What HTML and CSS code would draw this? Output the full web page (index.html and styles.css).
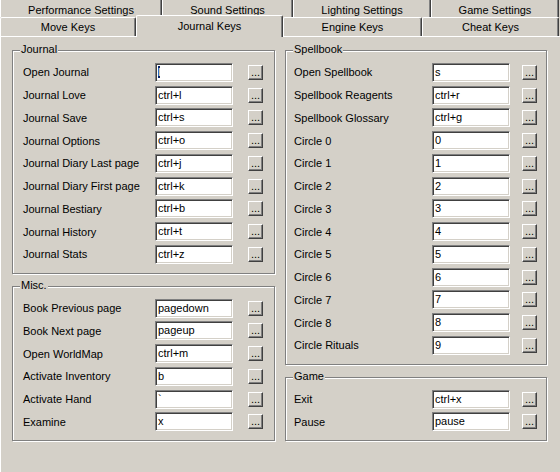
FILE: index.html
```html
<!DOCTYPE html>
<html lang="en">
<head>
<meta charset="UTF-8">
<title>Key Settings</title>
<link rel="stylesheet" href="styles.css">
</head>
<body>
<div class="tabs">
  <div class="tab-row tab-row-back">
    <div class="tab">Performance Settings</div>
    <div class="tab">Sound Settings</div>
    <div class="tab">Lighting Settings</div>
    <div class="tab">Game Settings</div>
  </div>
  <div class="tab-row tab-row-front">
    <div class="tab">Move Keys</div>
    <div class="tab tab-active">Journal Keys</div>
    <div class="tab">Engine Keys</div>
    <div class="tab">Cheat Keys</div>
  </div>
</div>

<div class="panel">
  <div class="column column-left">
    <div class="group">
      <span class="legend">Journal</span>
      <div class="rows">
        <span class="label">Open Journal</span><div class="edit"><span class="sel">l</span></div><button class="btn">...</button>
        <span class="label">Journal Love</span><div class="edit">ctrl+l</div><button class="btn">...</button>
        <span class="label">Journal Save</span><div class="edit">ctrl+s</div><button class="btn">...</button>
        <span class="label">Journal Options</span><div class="edit">ctrl+o</div><button class="btn">...</button>
        <span class="label">Journal Diary Last page</span><div class="edit">ctrl+j</div><button class="btn">...</button>
        <span class="label">Journal Diary First page</span><div class="edit">ctrl+k</div><button class="btn">...</button>
        <span class="label">Journal Bestiary</span><div class="edit">ctrl+b</div><button class="btn">...</button>
        <span class="label">Journal History</span><div class="edit">ctrl+t</div><button class="btn">...</button>
        <span class="label">Journal Stats</span><div class="edit">ctrl+z</div><button class="btn">...</button>
      </div>
    </div>
    <div class="group">
      <span class="legend">Misc.</span>
      <div class="rows">
        <span class="label">Book Previous page</span><div class="edit">pagedown</div><button class="btn">...</button>
        <span class="label">Book Next page</span><div class="edit">pageup</div><button class="btn">...</button>
        <span class="label">Open WorldMap</span><div class="edit">ctrl+m</div><button class="btn">...</button>
        <span class="label">Activate Inventory</span><div class="edit">b</div><button class="btn">...</button>
        <span class="label">Activate Hand</span><div class="edit">`</div><button class="btn">...</button>
        <span class="label">Examine</span><div class="edit">x</div><button class="btn">...</button>
      </div>
    </div>
  </div>

  <div class="column column-right">
    <div class="group">
      <span class="legend">Spellbook</span>
      <div class="rows">
        <span class="label">Open Spellbook</span><div class="edit">s</div><button class="btn">...</button>
        <span class="label">Spellbook Reagents</span><div class="edit">ctrl+r</div><button class="btn">...</button>
        <span class="label">Spellbook Glossary</span><div class="edit">ctrl+g</div><button class="btn">...</button>
        <span class="label">Circle 0</span><div class="edit">0</div><button class="btn">...</button>
        <span class="label">Circle 1</span><div class="edit">1</div><button class="btn">...</button>
        <span class="label">Circle 2</span><div class="edit">2</div><button class="btn">...</button>
        <span class="label">Circle 3</span><div class="edit">3</div><button class="btn">...</button>
        <span class="label">Circle 4</span><div class="edit">4</div><button class="btn">...</button>
        <span class="label">Circle 5</span><div class="edit">5</div><button class="btn">...</button>
        <span class="label">Circle 6</span><div class="edit">6</div><button class="btn">...</button>
        <span class="label">Circle 7</span><div class="edit">7</div><button class="btn">...</button>
        <span class="label">Circle 8</span><div class="edit">8</div><button class="btn">...</button>
        <span class="label">Circle Rituals</span><div class="edit">9</div><button class="btn">...</button>
      </div>
    </div>
    <div class="group">
      <span class="legend">Game</span>
      <div class="rows">
        <span class="label">Exit</span><div class="edit">ctrl+x</div><button class="btn">...</button>
        <span class="label">Pause</span><div class="edit">pause</div><button class="btn">...</button>
      </div>
    </div>
  </div>
</div>
</body>
</html>
```

FILE: styles.css
```css
* {
  box-sizing: border-box;
}
body {
  margin: 0;
  background-color: #d4d0c8;
  font-family: "Liberation Sans", Arial, sans-serif;
  font-size: 11px;
  color: #000;
  overflow: hidden;
}

/* tab strip, two rows */
.tab-row {
  display: flex;
  align-items: flex-start;
}
.tab-row-back {
  height: 17px;
}
.tab-row-front {
  height: 19px;
}
.tab {
  display: flex;
  align-items: center;
  justify-content: center;
  background-color: #d4d0c8;
  border-left: 1px solid #fff;
  border-right: 1px solid #404040;
  box-shadow: inset -1px 0 #808080;
  white-space: nowrap;
}
.tab-row-back .tab {
  height: 17px;
  padding-top: 2px;
}
.tab-row-front .tab {
  height: 19px;
  border-top: 1px solid #fff;
  border-radius: 2px 2px 0 0;
}
.tab-row-back .tab:nth-child(1) { width: 162px; }
.tab-row-back .tab:nth-child(2) { width: 131px; }
.tab-row-back .tab:nth-child(3) { width: 138px; }
.tab-row-back .tab:nth-child(4) { width: 128px; }
.tab-row-front .tab:nth-child(1) { width: 136px; }
.tab-row-front .tab:nth-child(2) { width: 147px; }
.tab-row-front .tab:nth-child(3) { width: 139px; }
.tab-row-front .tab:nth-child(4) { width: 137px; }

.tab-row-front .tab-active {
  position: relative;
  z-index: 1;
  margin-top: -2px;
  height: 22px;
  padding-bottom: 2px;
}

/* page body under the tabs */
.panel {
  display: flex;
  gap: 10px;
  height: 436px;
  padding: 13px 0 0 11px;
  border-top: 1px solid #fff;
  border-left: 1px solid #fff;
}
.column {
  display: flex;
  flex-direction: column;
  gap: 12px;
}
.column-left {
  width: 263px;
}
.column-right {
  width: 262px;
}

/* etched group box */
.group {
  position: relative;
  border: 1px solid #808080;
  box-shadow: inset 1px 1px #fff, 1px 1px #fff;
  padding: 10px 0 7px 10px;
}
.column-right .group {
  padding-left: 8px;
}
.legend {
  position: absolute;
  top: -8px;
  left: 7px;
  padding: 0 1px;
  line-height: 13px;
  background-color: #d4d0c8;
}

/* label | key box | button; the gap sits before the button only */
.rows {
  display: grid;
  grid-template-columns: 132px 78px 15px 15px;
  grid-auto-rows: 22.75px;
  align-items: center;
}
.column-right .rows {
  grid-template-columns: 138px 78px 12px 15px;
}
.rows .btn {
  grid-column: 4;
}
.label {
  white-space: nowrap;
}

/* sunken edit box */
.edit {
  height: 19px;
  line-height: 15px;
  padding: 1px 2px;
  background-color: #fff;
  border: 1px solid;
  border-color: #808080 #fff #fff #808080;
  box-shadow: inset 1px 1px #404040, inset -1px -1px #d4d0c8;
  white-space: nowrap;
  overflow: hidden;
}
.sel {
  background-color: #0a246a;
  color: #fff;
}

/* small raised button */
.btn {
  width: 15px;
  height: 15px;
  padding: 0;
  font-family: inherit;
  font-size: 11px;
  line-height: 9px;
  color: #000;
  background-color: #d4d0c8;
  border: 1px solid;
  border-color: #fff #404040 #404040 #fff;
  box-shadow: inset -1px -1px #808080;
  border-radius: 0;
}
```
